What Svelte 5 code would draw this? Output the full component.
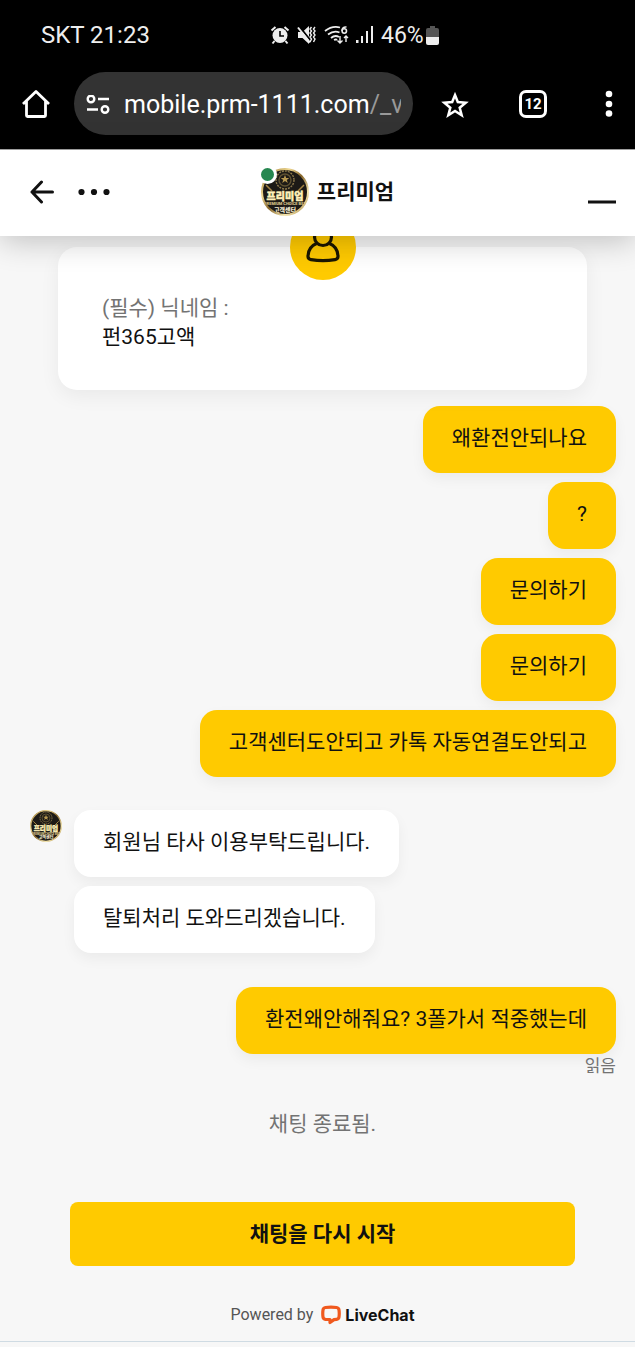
<script>
  const sent = ['왜환전안되나요', '?', '문의하기', '문의하기', '고객센터도안되고 카톡 자동연결도안되고'];
  const received = ['회원님 타사 이용부탁드립니다.', '탈퇴처리 도와드리겠습니다.'];
</script>

{#snippet brand()}
  <svg class="brand" viewBox="0 0 48 48" role="img" aria-label="프리미엄">
    <defs>
      <linearGradient id="gold" x1="0" y1="0" x2="1" y2="1">
        <stop offset="0" stop-color="#8b6a25" />
        <stop offset=".3" stop-color="#f0d890" />
        <stop offset=".5" stop-color="#86652a" />
        <stop offset=".75" stop-color="#f5e6ae" />
        <stop offset="1" stop-color="#9a7730" />
      </linearGradient>
      <clipPath id="disc"><circle cx="24" cy="24" r="23" /></clipPath>
    </defs>
    <circle cx="24" cy="24" r="23" fill="#1d1a16" />
    <g fill="none" stroke="#8f7b4c" stroke-width="1.4">
      <circle cx="24" cy="12" r="9" stroke-dasharray="2 1" />
      <circle cx="24" cy="12" r="6" stroke="#5f5232" />
    </g>
    <path d="m24 7 1.200 3h3l-2.400 2 1 3-2.800-2-2.800 2 1-3-2.400-2h3z" fill="#b79850" />
    <path d="M5 17l6 6M43 17l-6 6M6 39l6 4M42 39l-6 4" stroke="#a58442" stroke-width="1.500" />
    <g clip-path="url(#disc)" text-anchor="middle" font-weight="900">
      <text x="24" y="32" font-size="10" fill="#fff0b8" stroke="#fff0b8" stroke-width=".5">프리미엄</text>
      <text x="24" y="37" font-size="4" fill="#d9c48a">PREMIUM CHOICE BET</text>
      <text x="24" y="44" font-size="6" fill="#f3ead0">고객센터</text>
    </g>
    <circle cx="24" cy="24" r="23" fill="none" stroke="url(#gold)" stroke-width="2" />
  </svg>
{/snippet}

<div class="screen">
  <div class="status">
    <span class="carrier">SKT 21:23</span>
    <div class="indicators">
      <svg width="20" height="20" viewBox="0 0 20 20" fill="#eee">
        <circle cx="10" cy="10.500" r="7.500" />
        <path d="M1.500 5.500 5.500 2M18.500 5.500 14.500 2M4.500 16 2.500 18.500M15.500 16l2 2.500" stroke="#eee" stroke-width="2" />
        <path d="M10 6v5h4" fill="none" stroke="#000" stroke-width="1.600" />
      </svg>
      <svg width="20" height="20" viewBox="0 0 20 20" fill="#eee">
        <path d="M1 7h4.500L12 1v18l-6.500-6H1z" />
        <path d="M2 1 14 16" stroke="#000" stroke-width="2" />
        <path d="M1 2.500 13 17.500" stroke="#eee" stroke-width="2" />
        <path d="M14.500 2l-1.500 2 1.500 2-1.500 2 1.500 2-1.500 2 1.500 2-1.500 3M18 2l-1.500 2L18 6l-1.500 2 1.500 2-1.500 2 1.500 2-1.500 3" fill="none" stroke="#eee" stroke-width="1.400" />
      </svg>
      <svg width="25" height="20" viewBox="0 0 25 20" fill="none" stroke="#eee" stroke-width="1.800">
        <path d="M1 6Q8 .500 16 2.500M4 9.500q6-4.500 11.500-2M7 13q4-3.500 8-1M10 15q2-1 3 0" />
        <path d="M22.500 2q-4.500-.500-4.500 4" stroke-width="1.600" />
        <circle cx="20.300" cy="6" r="2.200" stroke-width="1.600" />
        <path d="M16 11v7m-2.500-2.500L16 18l2.500-2.500M22 17v-6m-2 2 2-2 2 2" stroke-width="1.400" />
      </svg>
      <svg width="18" height="20" viewBox="0 0 18 20" fill="#eee">
        <path d="M0 15h2.500v3H0zM5 11h2v7H5zM10 6h2v12h-2zM15 1h2v17h-2z" />
      </svg>
      <span class="percent">46%</span>
      <svg width="13" height="20" viewBox="0 0 13 20">
        <path d="M4 1h5v2h2a2 2 0 0 1 2 2v7H0V5a2 2 0 0 1 2-2h2z" fill="#555" />
        <path d="M0 12h13v6a2 2 0 0 1-2 2H2a2 2 0 0 1-2-2z" fill="#eee" />
      </svg>
    </div>
  </div>

  <nav class="browser" aria-label="Browser">
    <button class="icon" aria-label="Home">
      <svg width="28" height="30" viewBox="0 0 28 30" fill="none" stroke="#fff" stroke-width="2.800">
        <path d="M1 15 14 2.500 27 15M4.500 12v14.500a1 1 0 0 0 1 1h17a1 1 0 0 0 1-1V12" stroke-linejoin="round" />
      </svg>
    </button>
    <button class="address">
      <svg width="24" height="20" viewBox="0 0 24 20" fill="none" stroke="#fff" stroke-width="2.400">
        <circle cx="5" cy="4" r="3.300" /><path d="M12 4h11M1 14.500h11" /><circle cx="19" cy="14.500" r="3.300" />
      </svg>
      <span class="url">mobile.prm-1111.com<span class="path">/_v</span></span>
    </button>
    <button class="icon" aria-label="Bookmark">
      <svg width="28" height="28" viewBox="0 0 28 28" fill="none" stroke="#fff" stroke-width="2.500">
        <path d="m14 5 2.800 7 7.900.700-6 5 2 7.500-6.700-4.200-6.700 4.200 2-7.500-6-5 7.900-.700z" />
      </svg>
    </button>
    <button class="tabs" aria-label="12 tabs">12</button>
    <button class="icon" aria-label="Menu">
      <svg width="8" height="28" viewBox="0 0 8 28" fill="#fff"><circle cx="4" cy="4" r="3.300" /><circle cx="4" cy="14" r="3.300" /><circle cx="4" cy="23.500" r="3.300" /></svg>
    </button>
  </nav>

  <header>
    <div class="left">
      <button class="icon" aria-label="뒤로">
        <svg width="24" height="24" viewBox="0 0 24 24" fill="none" stroke="#111" stroke-width="3" stroke-linecap="round" stroke-linejoin="round"><path d="M11.500 2 2 12l9.500 10M2 12h20.500" /></svg>
      </button>
      <button class="icon" aria-label="더 보기">
        <svg width="32" height="8" viewBox="0 0 32 8" fill="#111"><circle cx="3.500" cy="4" r="3.100" /><circle cx="16" cy="4" r="3.100" /><circle cx="28.500" cy="4" r="3.100" /></svg>
      </button>
    </div>
    <div class="agent">
      <div class="photo">{@render brand()}<span class="online"></span></div>
      <h1>프리미엄</h1>
    </div>
    <button class="icon minimize" aria-label="최소화">
      <svg width="28" height="4" viewBox="0 0 28 4"><path d="M0 2h28" stroke="#111" stroke-width="3" /></svg>
    </button>
  </header>

  <main>
    <section class="card">
      <div class="user">
        <svg width="34" height="42" viewBox="0 0 34 42" fill="none" stroke="#1b1700" stroke-width="3.200" stroke-linejoin="round">
          <circle cx="17" cy="13" r="8.500" />
          <path d="M10.500 19.500C4.500 22 2 26 2 32.500q0 2.500 3 3.200 12 2 24 0 3-.700 3-3.200c0-6.500-2.500-10.500-8.500-13" />
        </svg>
      </div>
      <p class="label">(필수) 닉네임 :</p>
      <p>펀365고액</p>
    </section>

    <div class="group own">
      {#each sent as text}<div class="bubble">{text}</div>{/each}
    </div>

    <div class="reply">
      <div class="avatar">{@render brand()}</div>
      <div class="group">
        {#each received as text}<div class="bubble">{text}</div>{/each}
      </div>
    </div>

    <div class="group own">
      <div class="bubble">환전왜안해줘요? 3폴가서 적중했는데</div>
    </div>
    <p class="read">읽음</p>
    <p class="ended">채팅 종료됨.</p>
    <button class="restart">채팅을 다시 시작</button>
  </main>

  <footer>
    <span>Powered by</span>
    <a href="#livechat">
      <svg width="20" height="20" viewBox="0 0 20 20" fill="none" stroke="#f0591e" stroke-width="3.200" stroke-linejoin="round">
        <path d="M4.500 2.500Q10 1.700 15.500 2.500 17.700 2.800 18 5q.500 3.500 0 7-.300 2-2.500 2.300L13 14.600 9 17.500v-3l-4.500-.200Q2.300 14 2 12q-.500-3.500 0-7 .300-2.200 2.500-2.500z" />
      </svg>
      LiveChat
    </a>
  </footer>
</div>

<style>
  :global(body) { margin: 0; background: #f7f7f7; }
  .screen { font: 21px/29px Roboto, "Noto Sans CJK KR", sans-serif; color: #111; background: #f7f7f7; overflow: hidden; }
  p, h1 { margin: 0; }
  button { font: inherit; color: inherit; border: 0; padding: 0; background: none; cursor: pointer; }
  svg { display: block; flex: none; }
  .icon { display: flex; align-items: center; justify-content: center; }

  .status { display: flex; align-items: center; height: 72px; padding: 0 0 2px 41px; box-sizing: border-box; background: #000; color: #eee; font-size: 24px; }
  .carrier { flex: 0 0 229px; }
  .indicators { display: flex; align-items: center; gap: 7px; }
  .percent { margin-right: -5px; font-size: 23px; }

  .browser { display: flex; align-items: center; height: 78px; padding: 0 22px 14px; box-sizing: border-box; background: #000; border-bottom: 1px solid #aaa; }
  .address { display: flex; align-items: center; flex: 1; min-width: 0; height: 63px; margin: 0 28px 0 24px; padding: 2px 12px 0; gap: 14px; border-radius: 32px; background: #333; color: #fff; font-size: 25px; text-align: left; }
  .url { flex: 1; min-width: 0; overflow: hidden; white-space: nowrap; }
  .path { color: #999; }
  .tabs { box-sizing: border-box; width: 28px; height: 28px; margin: 0 58px 0 50px; border: 3px solid #fff; border-radius: 7px; color: #fff; font-size: 15px; line-height: 22px; font-weight: 700; }

  header { position: relative; z-index: 2; display: grid; grid-template-columns: 1fr auto 1fr; align-items: center; height: 86px; padding: 0 19px 2px 30px; box-sizing: border-box; background: #fff; box-shadow: 0 4px 32px rgba(0, 0, 0, .24); }
  .left { display: flex; align-items: center; gap: 24px; }
  .agent { display: flex; align-items: center; gap: 8px; padding-left: 9px; }
  .photo { position: relative; width: 48px; height: 48px; }
  .brand { width: 100%; height: 100%; }
  .online { position: absolute; left: -3px; top: -3px; width: 13px; height: 13px; border: 3px solid #fff; border-radius: 50%; background: #268750; }
  h1 { font-size: 21px; line-height: 29px; font-weight: 700; }
  .minimize { justify-self: end; margin-top: 20px; }

  main { padding: 11px 19px 0; }
  .card { position: relative; margin: 0 29px 16px 39px; padding: 47px 44px 38px; border-radius: 19px; background: #fff; box-shadow: 0 6px 20px rgba(0, 0, 0, .06); }
  .label { color: #737373; }
  .user { position: absolute; top: -33px; left: 50%; display: grid; place-items: center; width: 66px; height: 66px; margin-left: -33px; border-radius: 50%; background: #ffca00; }
  .user svg { margin-top: -5px; }
  .group { display: flex; flex-direction: column; align-items: flex-start; gap: 9px; }
  .own { align-items: flex-end; }
  .bubble { padding: 18px 29px 20px; border-radius: 17px; background: #fff; box-shadow: 0 6px 14px rgba(0, 0, 0, .05); }
  .own .bubble { background: #ffca00; }
  .reply { display: flex; gap: 12px; margin: 33px 0 34px 11px; }
  .avatar { width: 32px; height: 32px; }
  .read { font-size: 17px; line-height: 24px; text-align: right; color: #737373; }
  .ended { margin-top: 32px; text-align: center; color: #737373; padding-left: 10px; }
  .restart { display: block; width: calc(100% - 92px); height: 64px; margin: 63px 41px 0 51px; border-radius: 8px; background: #ffca00; font-weight: 700; }
  footer { display: flex; align-items: center; justify-content: center; gap: 8px; height: 76px; padding: 23px 0 0 10px; box-sizing: border-box; border-bottom: 1px solid #cfdbe3; color: #555; font-size: 16px; line-height: 24px; }
  footer a { display: flex; align-items: center; gap: 4px; color: #111; font-family: Inter, sans-serif; font-weight: 700; text-decoration: none; }
</style>
